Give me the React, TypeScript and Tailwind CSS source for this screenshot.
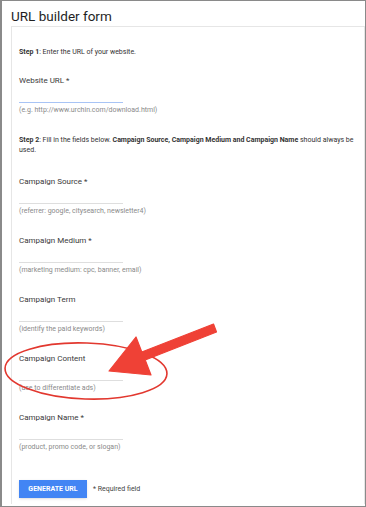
import React from "react";

const FIELDS = [
  { label: "Campaign Source *", hint: "(referrer: google, citysearch, newsletter4)" },
  { label: "Campaign Medium *", hint: "(marketing medium: cpc, banner, email)" },
  { label: "Campaign Term", hint: "(identify the paid keywords)" },
  { label: "Campaign Content", hint: "(use to differentiate ads)" },
  { label: "Campaign Name *", hint: "(product, promo code, or slogan)" },
];

function Field({ label, hint, focused, className }: { label: string; hint: string; focused?: boolean; className?: string }) {
  return (
    <div className={className}>
      <div className="text-[8px] leading-[12px] text-[#3a3a3a]">{label}</div>
      <div className={"h-[16px] w-[104px] border-b " + (focused ? "border-[#a8c4f5]" : "border-[#dedede]")} />
      <div className="mt-[2px] text-[7px] leading-[10px] text-[#8a8a8a]">{hint}</div>
    </div>
  );
}

export default function App() {
  return (
    <div className="relative w-[366px] h-[507px] bg-white border border-l-2 border-[#8a8a8a] overflow-hidden" style={{ fontFamily: "Roboto, 'Liberation Sans', sans-serif" }}>
      <h1 className="ml-[9px] pt-[6px] text-[13.5px] leading-[18px] text-[#1f1f1f]">URL builder form</h1>
      <div className="ml-[9px] mt-[1px] h-[478px] border-l border-t border-r border-[#e6e6e6] pl-[7px] pt-[20px]">
        <p className="text-[7px] leading-[10px] text-[#333]">
          <b>Step 1</b>: Enter the URL of your website.
        </p>
        <Field className="mt-[18px]" label="Website URL *" hint="(e.g. http://www.urchin.com/download.html)" focused />
        <p className="mt-[20px] pr-[4px] text-[7px] leading-[10px] text-[#333]">
          <b>Step 2</b>: Fill in the fields below. <b>Campaign Source, Campaign Medium and Campaign Name</b> should always be used.
        </p>
        <div className="mt-[21px] flex flex-col gap-[19px]">
          {FIELDS.map(f => (
            <Field key={f.label} label={f.label} hint={f.hint} />
          ))}
        </div>
        <div className="mt-[28px] flex items-center gap-[6px]">
          <button className="h-[18px] w-[68px] bg-[#4285f4] text-[7px] font-bold text-white shadow-sm">GENERATE URL</button>
          <span className="text-[7px] text-[#444]">* Required field</span>
        </div>
      </div>

      {/* annotation over the form */}
      <svg className="absolute left-0 top-0 pointer-events-none" width="366" height="507">
        <ellipse cx="84" cy="370" rx="81" ry="28" fill="none" stroke="#e2382f" strokeWidth="1.6" transform="rotate(2 84 370)" />
        <polygon
          points="107,370 134,336 139.8,351 211.5,323 214.5,331 143.2,359 149,374"
          fill="#ef4136"
          stroke="#ef4136"
          strokeWidth="1.2"
          strokeLinejoin="round"
        />
      </svg>
    </div>
  );
}
